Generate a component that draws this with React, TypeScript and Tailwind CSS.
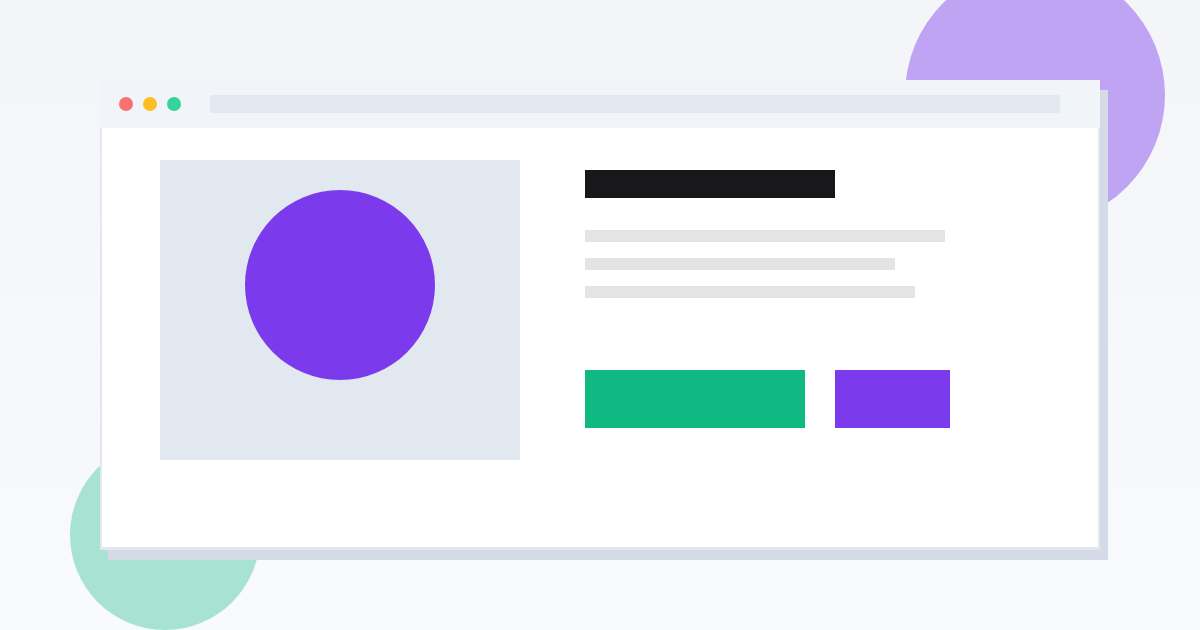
export default function App() {
  return (
    <div className="relative h-[630px] w-[1200px] overflow-hidden bg-gradient-to-b from-[#f3f5f8] to-[#f8fafc]">
      {/* Decorative blobs */}
      <div className="absolute left-[905px] top-[-35px] h-[260px] w-[260px] rounded-full bg-[#c0a4f4]" />
      <div className="absolute left-[70px] top-[440px] h-[190px] w-[190px] rounded-full bg-[#a7e3d0]" />

      <div className="relative pl-[100px] pt-[80px]">
        {/* Browser window */}
        <div className="flex h-[470px] w-[1000px] flex-col shadow-[8px_10px_0_#d5dbe6]">
          <div className="flex h-[48px] items-center gap-[10px] bg-[#f1f5f9] pl-[19px] pr-[40px]">
            <span className="h-[14px] w-[14px] rounded-full bg-[#f87171]" />
            <span className="h-[14px] w-[14px] rounded-full bg-[#fbbf24]" />
            <span className="h-[14px] w-[14px] rounded-full bg-[#34d399]" />
            <div className="ml-[19px] h-[18px] flex-1 rounded-[2px] bg-[#e2e8f0]" />
          </div>
          <div className="flex flex-1 border-x-[2px] border-b-[3px] border-[#e2e8f0] bg-white pl-[58px] pt-[32px]">
            <div className="flex h-[300px] w-[360px] justify-center bg-[#e2e8f0] pt-[30px]">
              <div className="h-[190px] w-[190px] rounded-full bg-[#7c3aed]" />
            </div>
            <div className="ml-[65px] flex flex-col pt-[10px]">
              <div className="h-[28px] w-[250px] bg-[#18181b]" />
              <div className="mt-[32px] flex flex-col gap-[16px]">
                <div className="h-[12px] w-[360px] bg-[#e4e4e7]" />
                <div className="h-[12px] w-[310px] bg-[#e4e4e7]" />
                <div className="h-[12px] w-[330px] bg-[#e4e4e7]" />
              </div>
              <div className="mt-[72px] flex gap-[30px]">
                <div className="h-[58px] w-[220px] bg-[#10b981]" />
                <div className="h-[58px] w-[115px] bg-[#7c3aed]" />
              </div>
            </div>
          </div>
        </div>
      </div>
    </div>
  );
}
